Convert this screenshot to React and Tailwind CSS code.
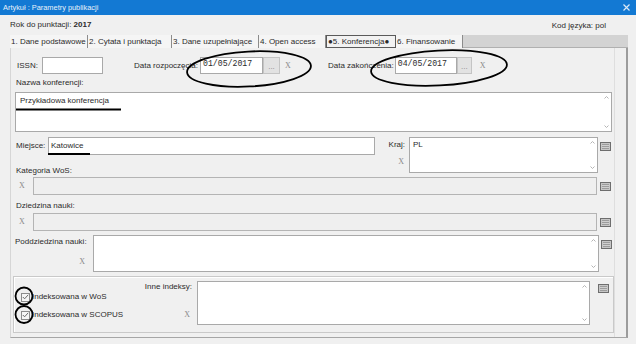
import React from 'react'

function ListIcon({ className = '' }) {
    return (
        <svg width="11" height="9" viewBox="0 0 11 9" className={className}>
            <rect x="0.5" y="0.5" width="10" height="8" fill="#c6c6c6" stroke="#6e6e6e" />
            <rect x="2" y="2" width="7" height="5" fill="#9c9c9c" />
            <line x1="2" y1="3.5" x2="9" y2="3.5" stroke="#cfcfcf" />
            <line x1="2" y1="5.5" x2="9" y2="5.5" stroke="#cfcfcf" />
        </svg>
    )
}

function Clear({ className = '' }) {
    return <span className={`font-['Liberation_Serif',serif] text-[8px] leading-none text-[#8a8a8a] ${className}`}>X</span>
}

function Arrows() {
    return (
        <div className="flex flex-col justify-between items-center w-[9px] py-[3px]">
            <svg width="5" height="3" viewBox="0 0 5 3"><path d="M0.5 2.5 L2.5 0.5 L4.5 2.5" fill="none" stroke="#b4b4b4" /></svg>
            <svg width="5" height="3" viewBox="0 0 5 3"><path d="M0.5 0.5 L2.5 2.5 L4.5 0.5" fill="none" stroke="#b4b4b4" /></svg>
        </div>
    )
}

function TextArea({ className = '', children }) {
    return (
        <div className={`flex bg-white border border-[#a9a9a9] ${className}`}>
            <div className="flex-1 pl-[3px] pt-[2px] leading-[10px]">{children}</div>
            <Arrows />
        </div>
    )
}

function Check() {
    return (
        <div className="w-[9px] h-[9px] border border-[#8c8c8c] bg-[#f6f6f6] flex items-center justify-center">
            <svg width="7" height="6" viewBox="0 0 7 6"><path d="M0.8 3 L2.6 4.8 L6.2 0.8" fill="none" stroke="#6a6a6a" strokeWidth="1" /></svg>
        </div>
    )
}

const tabs = [
    { label: '1. Dane podstawowe', w: 'w-[78px]' },
    { label: '2. Cytata i punktacja', w: 'w-[84px]' },
    { label: '3. Dane uzupełniające', w: 'w-[87px]' },
    { label: '4. Open access', w: 'w-[67px]' },
    { label: '●5. Konferencja●', w: 'w-[70px]', active: true },
    { label: '6. Finansowanie', w: 'w-[67px]' },
]

export default function App() {
    return (
        <div className="relative w-[636px] h-[344px] overflow-hidden bg-[#f0f0f0] text-[8px] text-[#2b2b2b] font-['Liberation_Sans',Arial,sans-serif]">
            {/* title bar */}
            <div className="h-[15px] bg-[#1379d3] flex items-center justify-between pl-[3px] pr-[6px] text-[#e8f1fa] text-[7.4px]">
                <span>Artykuł : Parametry publikacji</span>
                <svg width="7" height="7" viewBox="0 0 7 7"><path d="M0.5 0.5 L6.5 6.5 M6.5 0.5 L0.5 6.5" stroke="#dbe9f7" strokeWidth="1.2" /></svg>
            </div>

            <div className="h-[20px] flex items-center justify-between pl-[10px] pr-[30px]">
                <span>Rok do punktacji: <b>2017</b></span>
                <span className="pt-[2px]">Kod języka: pol</span>
            </div>

            {/* tabs */}
            <div className="ml-[10px] w-[618px] h-[13px] flex">
                {tabs.map((t) => (
                    <div
                        key={t.label}
                        className={`${t.w} h-full flex items-center pl-[1px] whitespace-nowrap overflow-hidden ${t.active ? 'border border-[#5a5a5a] bg-[#f2f2f2]' : 'border-r border-[#8c8c8c] bg-[#f5f5f5]'}`}
                    >
                        {t.label}
                    </div>
                ))}
                <div className="flex-1 bg-[#d3d3d3] border-b border-[#b0b0b0]" />
            </div>

            {/* panel */}
            <div className="ml-[10px] w-[618px] h-[290px] flex border-l border-[#d6d6d6] border-r-2 border-r-[#9c9c9c] border-b border-b-[#a6a6a6]">
                <div className="w-[604px] border-r border-[#dedede] flex flex-col">
                    {/* ISSN + dates */}
                    <div className="mt-[9px] h-[17px] flex items-center">
                        <span className="ml-[6px] w-[25px]">ISSN:</span>
                        <div className="w-[61px] h-[17px] bg-white border border-[#a9a9a9]" />
                        <span className="w-[97px] text-right pr-[2px]">Data rozpoczęcia:</span>
                        <div className="w-[63px] h-[17px] bg-white border border-[#a9a9a9] pl-[2px] pt-[1px] font-['Liberation_Mono',monospace] text-[8.2px] leading-[10px]">01/05/2017</div>
                        <div className="w-[17px] h-[17px] bg-[#e2e2e2] border border-[#c4c4c4] flex items-end justify-center text-[#888] leading-[12px]">...</div>
                        <Clear className="ml-[5px]" />
                        <span className="w-[104px] text-right pr-[1px]">Data zakończenia:</span>
                        <div className="w-[62px] h-[17px] bg-white border border-[#a9a9a9] pl-[2px] pt-[1px] font-['Liberation_Mono',monospace] text-[8.2px] leading-[10px]">04/05/2017</div>
                        <div className="w-[15px] h-[17px] bg-[#e2e2e2] border border-[#c4c4c4] flex items-end justify-center text-[#888] leading-[12px]">...</div>
                        <Clear className="ml-[8px]" />
                    </div>

                    <div className="mt-[4px] h-[10px] leading-[10px] pl-[5px]">Nazwa konferencji:</div>
                    <TextArea className="mt-[4px] ml-[4px] w-[597px] h-[40px]">
                        <div className="pl-[1px] pt-[1px]">Przykładowa konferencja</div>
                    </TextArea>

                    {/* Miejsce + Kraj */}
                    <div className="mt-[5px] flex items-start">
                        <div className="w-[364px] flex flex-col">
                            <div className="h-[18px] flex items-center">
                                <span className="ml-[5px] w-[32px]">Miejsce:</span>
                                <div className="w-[327px] h-[18px] bg-white border border-[#a9a9a9] flex items-center pl-[2px]">Katowice</div>
                            </div>
                            <div className="mt-[11px] h-[9px] leading-[9px] pl-[5px]">Kategoria WoS:</div>
                        </div>
                        <div className="w-[34px] flex flex-col items-end pr-[4px]">
                            <div className="h-[16px] flex items-center">Kraj:</div>
                            <Clear className="mt-[5px] mr-[1px]" />
                        </div>
                        <TextArea className="w-[189px] h-[36px]">PL</TextArea>
                        <ListIcon className="ml-[2px] mt-[5px]" />
                    </div>

                    <div className="mt-[2px] h-[18px] flex items-center">
                        <div className="w-[22px] flex justify-center"><Clear /></div>
                        <div className="w-[564px] h-[18px] bg-[#efefef] border border-[#b4b4b4]" />
                        <ListIcon className="ml-[3px]" />
                    </div>

                    <div className="mt-[6px] h-[10px] leading-[10px] pl-[5px]">Dziedzina nauki:</div>
                    <div className="mt-[2px] h-[18px] flex items-center">
                        <div className="w-[22px] flex justify-center"><Clear /></div>
                        <div className="w-[564px] h-[18px] bg-[#efefef] border border-[#b4b4b4]" />
                        <ListIcon className="ml-[3px]" />
                    </div>

                    {/* Poddziedzina */}
                    <div className="mt-[4px] flex items-start">
                        <div className="w-[82px] h-[37px] flex flex-col">
                            <div className="pl-[4px] mt-[2px] leading-[10px]">Poddziedzina nauki:</div>
                            <Clear className="self-end mr-[8px] mt-auto mb-[6px]" />
                        </div>
                        <TextArea className="w-[506px] h-[37px]" />
                        <ListIcon className="ml-[2px] mt-[5px]" />
                    </div>

                    {/* indexes group */}
                    <div className="mt-[4px] ml-[2px] w-[601px] h-[57px] border border-[#c9c9c9] shadow-[inset_1px_1px_0_#ffffff] flex items-start pt-[4px]">
                        <div className="w-[183px] flex flex-col">
                            <div className="h-[11px] flex items-center justify-end pr-[5px]">Inne indeksy:</div>
                            <div className="h-[10px] flex items-center">
                                <div className="ml-[7px]"><Check /></div>
                                <span className="ml-[2px]">Indeksowana w WoS</span>
                            </div>
                            <div className="mt-[8px] h-[10px] flex items-center">
                                <div className="ml-[7px]"><Check /></div>
                                <span className="ml-[2px]">Indeksowana w SCOPUS</span>
                                <Clear className="ml-auto mr-[7px]" />
                            </div>
                        </div>
                        <TextArea className="w-[393px] h-[44px]" />
                        <ListIcon className="ml-[8px] mt-[3px]" />
                    </div>
                </div>
            </div>

            {/* hand-drawn annotations */}
            <svg className="absolute left-0 top-0 pointer-events-none" width="636" height="344" viewBox="0 0 636 344">
                <g fill="none" stroke="#000" strokeWidth="1.8">
                    <ellipse cx="249" cy="69" rx="62" ry="17.5" transform="rotate(-3 249 69)" />
                    <ellipse cx="439" cy="68" rx="68" ry="17.5" transform="rotate(-3 439 68)" />
                    <line x1="16" y1="109.5" x2="121" y2="109.5" />
                    <line x1="48" y1="154" x2="90" y2="154" />
                    <circle cx="24" cy="296" r="8.5" />
                    <circle cx="24" cy="314.5" r="8.5" />
                </g>
            </svg>
        </div>
    )
}
